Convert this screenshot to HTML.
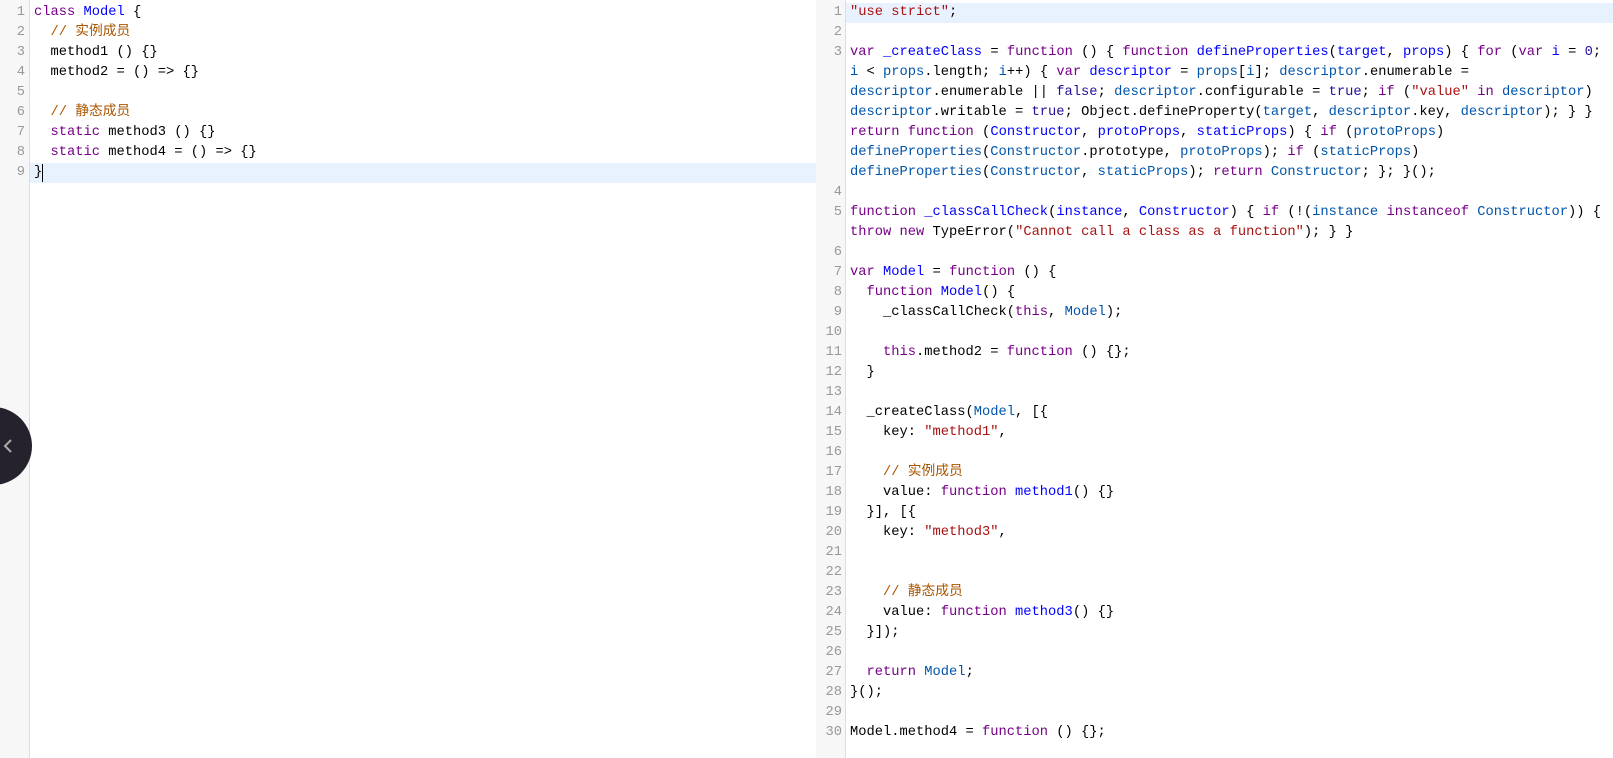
<!DOCTYPE html>
<html><head><meta charset="utf-8"><style>
html,body{margin:0;padding:0;width:1613px;height:758px;overflow:hidden;background:#fff}
.pane{position:absolute;top:0;height:758px;font-family:"Liberation Mono","Noto Sans CJK SC",monospace;font-size:13.75px;color:#000}
.g{position:absolute;top:0;left:0;height:758px;background:#f7f7f7;border-right:1px solid #ddd}
.lines{position:absolute;top:3px;left:0;right:0}
.r{position:relative;height:20px;line-height:20px;white-space:pre}
.n{position:absolute;left:0;text-align:right;color:#999}
.act{background:#e8f2ff}
.k{color:#708}.d{color:#00f}.v{color:#05a}.s{color:#a11}.c{color:#a50}.a{color:#219}
</style></head><body>
<div class="pane" style="left:0;width:816px">
<div class="g" style="width:29px"></div>
<div class="lines">
<div class="r"><span class="n" style="width:25px">1</span><span style="position:absolute;left:34px"><span class="k">class</span> <span class="d">Model</span> {</span></div>
<div class="r"><span class="n" style="width:25px">2</span><span style="position:absolute;left:34px">  <span class="c">// 实例成员</span></span></div>
<div class="r"><span class="n" style="width:25px">3</span><span style="position:absolute;left:34px">  method1 () {}</span></div>
<div class="r"><span class="n" style="width:25px">4</span><span style="position:absolute;left:34px">  method2 = () =&gt; {}</span></div>
<div class="r"><span class="n" style="width:25px">5</span></div>
<div class="r"><span class="n" style="width:25px">6</span><span style="position:absolute;left:34px">  <span class="c">// 静态成员</span></span></div>
<div class="r"><span class="n" style="width:25px">7</span><span style="position:absolute;left:34px">  <span class="k">static</span> method3 () {}</span></div>
<div class="r"><span class="n" style="width:25px">8</span><span style="position:absolute;left:34px">  <span class="k">static</span> method4 = () =&gt; {}</span></div>
<div class="r"><div class="act" style="position:absolute;left:30px;right:0;top:0;bottom:0"></div><span class="n" style="width:25px">9</span><span style="position:absolute;left:34px">}</span><span style="position:absolute;left:42px;top:1px;width:1px;height:18px;background:#000"></span></div>
</div>
</div>
<div style="position:absolute;left:-46px;top:407px;width:78px;height:78px;border-radius:50%;background:#25222d"></div>
<svg style="position:absolute;left:2px;top:438px" width="12" height="16" viewBox="0 0 12 16"><path d="M9 2 L3 8 L9 14" fill="none" stroke="#aaa" stroke-width="2"/></svg>
<div class="pane" style="left:816px;width:797px">
<div class="g" style="width:29px"></div>
<div class="lines">
<div class="r"><div class="act" style="position:absolute;left:30px;right:0;top:0;bottom:0"></div><span class="n" style="width:26px">1</span><span style="position:absolute;left:34px"><span class="s">"use strict"</span>;</span></div>
<div class="r"><span class="n" style="width:26px">2</span></div>
<div class="r"><span class="n" style="width:26px">3</span><span style="position:absolute;left:34px"><span class="k">var</span> <span class="d">_createClass</span> = <span class="k">function</span> () { <span class="k">function</span> <span class="d">defineProperties</span>(<span class="d">target</span>, <span class="d">props</span>) { <span class="k">for</span> (<span class="k">var</span> <span class="d">i</span> = <span class="a">0</span>;</span></div>
<div class="r"><span style="position:absolute;left:34px"><span class="v">i</span> &lt; <span class="v">props</span>.length; <span class="v">i</span>++) { <span class="k">var</span> <span class="d">descriptor</span> = <span class="v">props</span>[<span class="v">i</span>]; <span class="v">descriptor</span>.enumerable =</span></div>
<div class="r"><span style="position:absolute;left:34px"><span class="v">descriptor</span>.enumerable || <span class="a">false</span>; <span class="v">descriptor</span>.configurable = <span class="a">true</span>; <span class="k">if</span> (<span class="s">"value"</span> <span class="k">in</span> <span class="v">descriptor</span>)</span></div>
<div class="r"><span style="position:absolute;left:34px"><span class="v">descriptor</span>.writable = <span class="a">true</span>; Object.defineProperty(<span class="v">target</span>, <span class="v">descriptor</span>.key, <span class="v">descriptor</span>); } }</span></div>
<div class="r"><span style="position:absolute;left:34px"><span class="k">return</span> <span class="k">function</span> (<span class="d">Constructor</span>, <span class="d">protoProps</span>, <span class="d">staticProps</span>) { <span class="k">if</span> (<span class="v">protoProps</span>)</span></div>
<div class="r"><span style="position:absolute;left:34px"><span class="v">defineProperties</span>(<span class="v">Constructor</span>.prototype, <span class="v">protoProps</span>); <span class="k">if</span> (<span class="v">staticProps</span>)</span></div>
<div class="r"><span style="position:absolute;left:34px"><span class="v">defineProperties</span>(<span class="v">Constructor</span>, <span class="v">staticProps</span>); <span class="k">return</span> <span class="v">Constructor</span>; }; }();</span></div>
<div class="r"><span class="n" style="width:26px">4</span></div>
<div class="r"><span class="n" style="width:26px">5</span><span style="position:absolute;left:34px"><span class="k">function</span> <span class="d">_classCallCheck</span>(<span class="d">instance</span>, <span class="d">Constructor</span>) { <span class="k">if</span> (!(<span class="v">instance</span> <span class="k">instanceof</span> <span class="v">Constructor</span>)) {</span></div>
<div class="r"><span style="position:absolute;left:34px"><span class="k">throw</span> <span class="k">new</span> TypeError(<span class="s">"Cannot call a class as a function"</span>); } }</span></div>
<div class="r"><span class="n" style="width:26px">6</span></div>
<div class="r"><span class="n" style="width:26px">7</span><span style="position:absolute;left:34px"><span class="k">var</span> <span class="d">Model</span> = <span class="k">function</span> () {</span></div>
<div class="r"><span class="n" style="width:26px">8</span><span style="position:absolute;left:34px">  <span class="k">function</span> <span class="d">Model</span>() {</span></div>
<div class="r"><span class="n" style="width:26px">9</span><span style="position:absolute;left:34px">    _classCallCheck(<span class="k">this</span>, <span class="v">Model</span>);</span></div>
<div class="r"><span class="n" style="width:26px">10</span></div>
<div class="r"><span class="n" style="width:26px">11</span><span style="position:absolute;left:34px">    <span class="k">this</span>.method2 = <span class="k">function</span> () {};</span></div>
<div class="r"><span class="n" style="width:26px">12</span><span style="position:absolute;left:34px">  }</span></div>
<div class="r"><span class="n" style="width:26px">13</span></div>
<div class="r"><span class="n" style="width:26px">14</span><span style="position:absolute;left:34px">  _createClass(<span class="v">Model</span>, [{</span></div>
<div class="r"><span class="n" style="width:26px">15</span><span style="position:absolute;left:34px">    key: <span class="s">"method1"</span>,</span></div>
<div class="r"><span class="n" style="width:26px">16</span></div>
<div class="r"><span class="n" style="width:26px">17</span><span style="position:absolute;left:34px">    <span class="c">// 实例成员</span></span></div>
<div class="r"><span class="n" style="width:26px">18</span><span style="position:absolute;left:34px">    value: <span class="k">function</span> <span class="d">method1</span>() {}</span></div>
<div class="r"><span class="n" style="width:26px">19</span><span style="position:absolute;left:34px">  }], [{</span></div>
<div class="r"><span class="n" style="width:26px">20</span><span style="position:absolute;left:34px">    key: <span class="s">"method3"</span>,</span></div>
<div class="r"><span class="n" style="width:26px">21</span></div>
<div class="r"><span class="n" style="width:26px">22</span></div>
<div class="r"><span class="n" style="width:26px">23</span><span style="position:absolute;left:34px">    <span class="c">// 静态成员</span></span></div>
<div class="r"><span class="n" style="width:26px">24</span><span style="position:absolute;left:34px">    value: <span class="k">function</span> <span class="d">method3</span>() {}</span></div>
<div class="r"><span class="n" style="width:26px">25</span><span style="position:absolute;left:34px">  }]);</span></div>
<div class="r"><span class="n" style="width:26px">26</span></div>
<div class="r"><span class="n" style="width:26px">27</span><span style="position:absolute;left:34px">  <span class="k">return</span> <span class="v">Model</span>;</span></div>
<div class="r"><span class="n" style="width:26px">28</span><span style="position:absolute;left:34px">}();</span></div>
<div class="r"><span class="n" style="width:26px">29</span></div>
<div class="r"><span class="n" style="width:26px">30</span><span style="position:absolute;left:34px">Model.method4 = <span class="k">function</span> () {};</span></div>
</div>
</div>
</body></html>
